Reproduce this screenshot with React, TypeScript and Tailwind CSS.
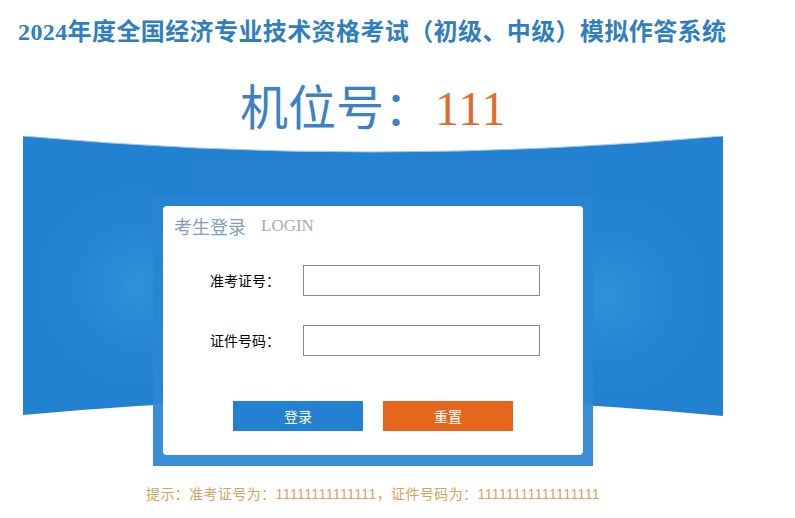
import React from "react";

function Banner() {
  return (
    <svg
      className="absolute left-[23px] top-0"
      width="700"
      height="282"
      viewBox="0 0 700 282"
      aria-hidden="true"
    >
      <defs>
        <radialGradient id="glowL" cx="115" cy="150" r="120" gradientUnits="userSpaceOnUse">
          <stop offset="0" stopColor="#3194da" stopOpacity="0.9" />
          <stop offset="1" stopColor="#2281d0" stopOpacity="0" />
        </radialGradient>
        <radialGradient id="glowR" cx="585" cy="160" r="120" gradientUnits="userSpaceOnUse">
          <stop offset="0" stopColor="#3194da" stopOpacity="0.9" />
          <stop offset="1" stopColor="#2281d0" stopOpacity="0" />
        </radialGradient>
        <pattern id="grid" width="6" height="6" patternUnits="userSpaceOnUse">
          <path d="M6 0 L0 0 0 6" fill="none" stroke="#ffffff" strokeOpacity="0.045" strokeWidth="1" />
        </pattern>
        <linearGradient id="gridFade" x1="0" y1="0" x2="0" y2="1">
          <stop offset="0" stopColor="#fff" stopOpacity="0" />
          <stop offset="0.4" stopColor="#fff" stopOpacity="1" />
          <stop offset="1" stopColor="#fff" stopOpacity="0" />
        </linearGradient>
        <mask id="gridMask">
          <rect x="170" y="10" width="400" height="60" fill="url(#gridFade)" />
        </mask>
        <clipPath id="shape">
          <path d="M0 0 Q350 32 700 0 L700 280 Q350 246 0 279 Z" />
        </clipPath>
      </defs>
      <g clipPath="url(#shape)">
        <rect x="0" y="0" width="700" height="282" fill="#2281d0" />
        <rect x="0" y="0" width="700" height="282" fill="url(#glowL)" />
        <rect x="0" y="0" width="700" height="282" fill="url(#glowR)" />
        <rect x="0" y="0" width="700" height="282" fill="url(#grid)" mask="url(#gridMask)" />
      </g>
      <path d="M0 0 Q350 32 700 0" fill="none" stroke="#9cc8ec" strokeWidth="1" />
    </svg>
  );
}

export default function App() {
  return (
    <div
      className="w-[795px] h-[518px] bg-white overflow-hidden"
      style={{ fontFamily: '"Noto Sans CJK SC", sans-serif' }}
    >
      <div className="pt-[19px] pl-[18px] text-[24px] leading-[26px] font-bold tracking-[0.4px] text-[#2f7fc0] whitespace-nowrap font-['Liberation_Serif','Noto_Sans_CJK_SC',serif]">
        2024年度全国经济专业技术资格考试（初级、中级）模拟作答系统
      </div>

      <div className="mt-[35px] pl-[240px] h-[48px] leading-[48px] text-[48px] whitespace-nowrap">
        <span className="text-[#3a82c4] font-['Noto_Sans_CJK_SC',sans-serif]">机位号：</span>
        <span className="ml-[3px] tracking-[1px] text-[#e36b2a] font-['Liberation_Serif',serif]">111</span>
      </div>

      <div className="relative mt-[8px] h-[330px]">
        <Banner />
        <div className="relative ml-[153px] pt-[61px]">
          <div className="w-[440px] h-[269px] pt-[9px] pl-[10px] bg-[linear-gradient(to_bottom,#2784d2_0px,#2a87d3_206px,#3a8ed6_208px,#3a8ed6_100%)]">
            <div className="w-[420px] h-[249px] bg-white rounded-[4px] flex flex-col">
              <div className="mt-[10px] ml-[11px] h-[20px] leading-[20px] flex items-center whitespace-nowrap">
                <span className="text-[18px] text-[#7f9fc0]">考生登录</span>
                <span className="ml-[15px] text-[17px] font-normal text-[#ababab] font-['Liberation_Serif',serif]">
                  LOGIN
                </span>
              </div>

              <div className="mt-[29px] ml-[47px] flex items-center h-[31px]">
                <span className="w-[93px] text-[14px] text-black">准考证号：</span>
                <input
                  type="text"
                  className="w-[237px] h-[31px] border border-[#8a8a8a] bg-white outline-none px-1 text-[14px]"
                />
              </div>

              <div className="mt-[29px] ml-[47px] flex items-center h-[31px]">
                <span className="w-[93px] text-[14px] text-black">证件号码：</span>
                <input
                  type="text"
                  className="w-[237px] h-[31px] border border-[#8a8a8a] bg-white outline-none px-1 text-[14px]"
                />
              </div>

              <div className="mt-[45px] ml-[70px] flex gap-[20px]">
                <button className="w-[130px] h-[30px] bg-[#2281d1] text-white text-[14px] leading-[30px]">
                  登录
                </button>
                <button className="w-[130px] h-[30px] bg-[#e6661e] text-white text-[14px] leading-[30px]">
                  重置
                </button>
              </div>
            </div>
          </div>
        </div>
      </div>

      <div className="mt-[18px] ml-[146px] text-[14px] leading-[20px] tracking-[0.4px] text-[#d9a15f] whitespace-nowrap font-['Liberation_Sans','Noto_Sans_CJK_SC',sans-serif]">
        提示：准考证号为：11111111111111，证件号码为：11111111111111111
      </div>
    </div>
  );
}
